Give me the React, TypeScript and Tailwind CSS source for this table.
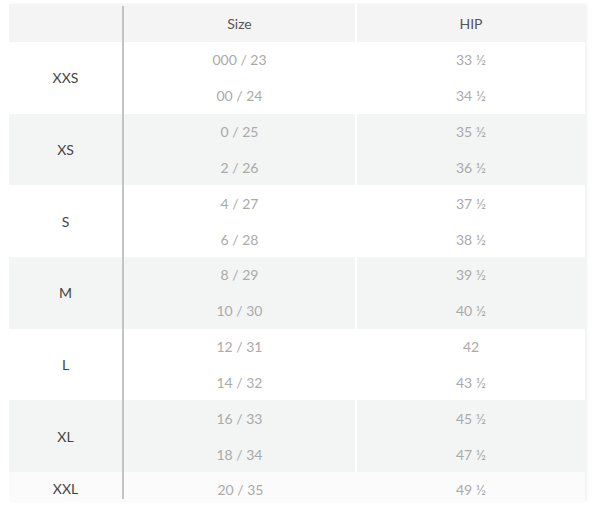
import React from 'react';

const bands = [
    { label: 'XXS', rows: [['000 / 23', '33 ½'], ['00 / 24', '34 ½']] },
    { label: 'XS', rows: [['0 / 25', '35 ½'], ['2 / 26', '36 ½']] },
    { label: 'S', rows: [['4 / 27', '37 ½'], ['6 / 28', '38 ½']] },
    { label: 'M', rows: [['8 / 29', '39 ½'], ['10 / 30', '40 ½']] },
    { label: 'L', rows: [['12 / 31', '42'], ['14 / 32', '43 ½']] },
    { label: 'XL', rows: [['16 / 33', '45 ½'], ['18 / 34', '47 ½']] },
];

export default function App() {
    return (
        <div className="w-[600px] h-[511px] bg-white pt-[4px] pl-[9px]" style={{ fontFamily: 'Lato, "Open Sans", sans-serif' }}>
            <div className="w-[576px] shadow-[2px_0_3px_rgba(0,0,0,0.06)] text-[14px]">
                {/* Header */}
                <div className="flex h-[38px] bg-[#f4f4f4]">
                    <div className="w-[115px] border-r-2 border-[#c4c4c4] mt-[2px]" />
                    <div className="w-[233px] flex items-center justify-center text-[#555] border-r-2 border-white">Size</div>
                    <div className="flex-1 flex items-center justify-center text-[#555]">HIP</div>
                </div>

                {bands.map((band, i) => (
                    <div key={band.label} className={`flex h-[71.7px] ${i % 2 === 0 ? 'bg-white' : 'bg-[#f3f4f4]'}`}>
                        <div className="w-[115px] border-r-2 border-[#c4c4c4] flex items-center justify-center text-[#444]">
                            {band.label}
                        </div>
                        <div className="w-[233px] flex flex-col border-r-2 border-white">
                            {band.rows.map((r) => (
                                <div key={r[0]} className="flex-1 flex items-center justify-center text-[#aaa]">{r[0]}</div>
                            ))}
                        </div>
                        <div className="flex-1 flex flex-col">
                            {band.rows.map((r) => (
                                <div key={r[1]} className="flex-1 flex items-center justify-center text-[#aaa]">{r[1]}</div>
                            ))}
                        </div>
                    </div>
                ))}

                {/* XXL */}
                <div className="flex h-[29px] bg-[#fbfbfb]">
                    <div className="w-[115px] border-r-2 border-[#c4c4c4] mb-[2px] flex items-center justify-center pt-[6px] text-[#444]">XXL</div>
                    <div className="w-[233px] flex items-center justify-center pt-[6px] text-[#aaa]">20 / 35</div>
                    <div className="flex-1 flex items-center justify-center pt-[6px] text-[#aaa]">49 ½</div>
                </div>
            </div>
        </div>
    );
}
